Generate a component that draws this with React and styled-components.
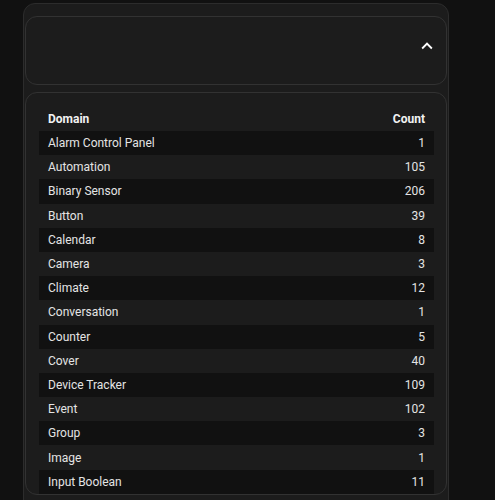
import React from 'react';
import styled, { createGlobalStyle } from 'styled-components';

const rows = [
  ['Alarm Control Panel', 1],
  ['Automation', 105],
  ['Binary Sensor', 206],
  ['Button', 39],
  ['Calendar', 8],
  ['Camera', 3],
  ['Climate', 12],
  ['Conversation', 1],
  ['Counter', 5],
  ['Cover', 40],
  ['Device Tracker', 109],
  ['Event', 102],
  ['Group', 3],
  ['Image', 1],
  ['Input Boolean', 11],
];

const ChevronUp = () => (
  <Chevron viewBox="0 0 24 24" aria-hidden="true">
    <path d="M7.41 15.41L12 10.83l4.59 4.58L18 14l-6-6-6 6z" fill="currentColor" />
  </Chevron>
);

const App = () => (
  <>
    <GlobalStyle />
    <Page>
      <Outer>
        <HeaderCard>
          <ChevronUp />
        </HeaderCard>
        <TableCard>
          <Table>
            <thead>
              <tr>
                <Th>Domain</Th>
                <Th align="right">Count</Th>
              </tr>
            </thead>
            <tbody>
              {rows.map(([name, count], i) => (
                <Row key={name} $odd={i % 2 === 0}>
                  <Td>{name}</Td>
                  <Td align="right">{count}</Td>
                </Row>
              ))}
            </tbody>
          </Table>
        </TableCard>
      </Outer>
    </Page>
  </>
);

export default App;

const GlobalStyle = createGlobalStyle`
  html, body {
    margin: 0;
    background: #111111;
    overflow: hidden;
  }
  body {
    font-family: Roboto, "Noto Sans", sans-serif;
    color: #e1e1e1;
  }
`;

const Page = styled.div`
  height: 500px;
  padding: 3px 0 0 23px;
  box-sizing: border-box;
  overflow: hidden;
`;

const Outer = styled.div`
  width: 426px;
  box-sizing: border-box;
  background: #1c1c1c;
  border: 1px solid #2c2c2c;
  border-radius: 12px;
  padding: 12px 1px 20px;
  display: flex;
  flex-direction: column;
  gap: 7px;
`;

const HeaderCard = styled.div`
  height: 69px;
  box-sizing: border-box;
  border: 1px solid #323232;
  border-radius: 12px;
  background: #1c1c1c;
  display: flex;
  align-items: flex-start;
  justify-content: flex-end;
  padding: 18px 8px 0 0;
`;

const Chevron = styled.svg`
  width: 22px;
  height: 22px;
  color: #ffffff;
`;

const TableCard = styled.div`
  box-sizing: border-box;
  border: 1px solid #323232;
  border-radius: 12px;
  background: #1c1c1c;
  padding: 14px 12px 0 13px;
`;

const Table = styled.table`
  width: 100%;
  border-collapse: collapse;
  font-size: 12px;
`;

const Th = styled.th`
  height: 24px;
  padding: 0 9px;
  text-align: ${(p) => p.align || 'left'};
  font-weight: 700;
  color: #f2f2f2;
`;

const Row = styled.tr`
  height: 24.2px;
  background: ${(p) => (p.$odd ? '#111111' : 'transparent')};
`;

const Td = styled.td`
  padding: 0 9px;
  text-align: ${(p) => p.align || 'left'};
  color: #e4e4e4;
`;
